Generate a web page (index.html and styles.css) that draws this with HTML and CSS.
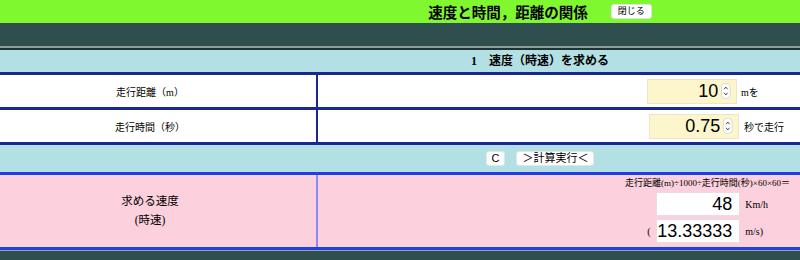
FILE: index.html
```html
<!DOCTYPE html>
<html lang="ja">
	<head>
		<meta charset="utf-8">
		<meta name="viewport" content="width=device-width,initial-scale=1">
		<title>速度と時間，距離の関係</title>
		<link rel="stylesheet" href="styles.css">
	</head>

	<body>
		<header class="topbar">
			<h1 class="topbar__title">速度と時間，距離の関係</h1>
			<button class="topbar__close" type="button">閉じる</button>
		</header>

		<div class="band"></div>

		<main class="calc">
			<div class="calc__heading">1　速度（時速）を求める</div>

			<div class="calc__row">
				<div class="calc__label">走行距離（m）</div>
				<div class="calc__value">
					<div class="numbox">
						<input class="numbox__input" type="text" value="10">
						<svg class="numbox__spin" width="11" height="18" viewBox="0 0 11 18" aria-hidden="true">
							<rect x="0.5" y="0.5" width="10" height="17" rx="4" fill="#fff" stroke="#d6d6d6"/>
							<path d="M3.5 7 5.5 4.5 7.5 7M3.5 11 5.5 13.5 7.5 11" fill="none" stroke="#444" stroke-width="1.1"/>
						</svg>
					</div>
					<span class="unit">mを</span>
				</div>
			</div>

			<div class="calc__row">
				<div class="calc__label">走行時間（秒）</div>
				<div class="calc__value calc__value--time">
					<div class="numbox">
						<input class="numbox__input" type="text" value="0.75">
						<svg class="numbox__spin" width="11" height="18" viewBox="0 0 11 18" aria-hidden="true">
							<rect x="0.5" y="0.5" width="10" height="17" rx="4" fill="#fff" stroke="#d6d6d6"/>
							<path d="M3.5 7 5.5 4.5 7.5 7M3.5 11 5.5 13.5 7.5 11" fill="none" stroke="#444" stroke-width="1.1"/>
						</svg>
					</div>
					<span class="unit">秒で走行</span>
				</div>
			</div>

			<div class="calc__actions">
				<button class="btn" type="button">C</button>
				<button class="btn" type="button">＞計算実行＜</button>
			</div>

			<div class="calc__result">
				<div class="calc__label calc__label--result">求める速度<br>(時速)</div>
				<div class="calc__answer">
					<div class="formula">走行距離(m)÷1000÷走行時間(秒)×60×60＝</div>
					<div class="answers">
						<span></span>
						<input class="outbox" type="text" value="48" readonly>
						<span class="unit">Km/h</span>
						<span class="unit">(</span>
						<input class="outbox" type="text" value="13.33333" readonly>
						<span class="unit">m/s)</span>
					</div>
				</div>
			</div>
		</main>

		<div class="footer-band"></div>
	</body>
</html>
```

FILE: styles.css
```css
* {
	box-sizing: border-box;
}
body {
	background-color: #2f4f4f;
	font-family: 'Liberation Serif', 'Noto Sans CJK JP', serif;
	margin: 0;
}
button {
	font-family: 'Liberation Sans', 'Noto Sans CJK JP', sans-serif;
}

/* TOP BAR */
.topbar {
	align-items: center;
	background-color: #80f830;
	display: flex;
	gap: 23px;
	height: 23px;
	justify-content: center;
	padding-left: 280px;
}
.topbar__title {
	font-size: 14.5px;
	font-weight: bold;
	margin: 0;
}
.topbar__close {
	background: #fff;
	border: 1px solid #e2e2e2;
	border-radius: 3px;
	font-size: 9px;
	height: 15px;
	line-height: 1;
	padding: 0 6px;
}
.band {
	border-bottom: 2px solid #8d9d9a;
	height: 25px;
}

/* CALCULATOR TABLE */
.calc {
	border-top: 2px solid #1e3232;
}
.calc__heading {
	background-color: #b2e0e5;
	border-bottom: 3px solid #1a2894;
	font-size: 12px;
	font-weight: bold;
	height: 25px;
	line-height: 22px;
	padding-left: 280px;
	text-align: center;
}
.calc__row {
	background-color: #fff;
	border-bottom: 3px solid #1a2894;
	display: grid;
	grid-template-columns: 318px 1fr;
	height: 35px;
}
.calc__row:nth-child(3) {
	height: 35px;
}
.calc__label {
	align-items: center;
	border-right: 2px solid #1a2894;
	display: flex;
	font-size: 10px;
	justify-content: center;
	padding-right: 16px;
}
.calc__value {
	align-items: center;
	display: flex;
	gap: 4px;
	padding-left: 329px;
}
.calc__value--time {
	gap: 5px;
	padding-left: 331px;
}
.unit {
	font-size: 10px;
}

.numbox {
	align-items: center;
	background-color: #fdf6cc;
	border: 1px solid #ece6c4;
	display: flex;
	height: 25px;
	padding-right: 5px;
	width: 90px;
}
.numbox__input {
	background: transparent;
	border: none;
	font-family: 'Liberation Sans', sans-serif;
	font-size: 18px;
	min-width: 0;
	padding: 0 3px 0 0;
	text-align: right;
	width: 100%;
}

.calc__actions {
	align-items: center;
	background-color: #b2e0e5;
	border-bottom: 3px solid #1f3ee8;
	display: flex;
	gap: 11px;
	height: 30px;
	justify-content: center;
	padding-left: 280px;
}
.btn {
	background: #fff;
	border: 1px solid #e4e4e4;
	border-radius: 3px;
	font-size: 11px;
	height: 15px;
	line-height: 1;
	padding: 0 5px;
}

.calc__result {
	background-color: #fcd0dc;
	border-bottom: 3px solid #1f3ee8;
	display: grid;
	grid-template-columns: 318px 1fr;
	height: 75px;
}
.calc__label--result {
	border-right-color: #8c8cf0;
	font-size: 11.5px;
	line-height: 19px;
	text-align: center;
}
.calc__answer {
	display: flex;
	flex-direction: column;
	padding: 1px 10px 0 0;
}
.formula {
	align-self: flex-end;
	font-size: 9px;
	line-height: 14px;
}
.answers {
	align-items: center;
	display: grid;
	gap: 3px 5px;
	grid-template-columns: 4px 84px auto;
	margin: 2px 22px 0 auto;
}
.outbox {
	background: #fff;
	border: 1px solid #eadce0;
	font-family: 'Liberation Sans', sans-serif;
	font-size: 18px;
	height: 24px;
	padding: 0 7px 0 0;
	text-align: right;
	width: 84px;
}

.footer-band {
	border-top: 1px solid #90a4a4;
	height: 9px;
}
```
